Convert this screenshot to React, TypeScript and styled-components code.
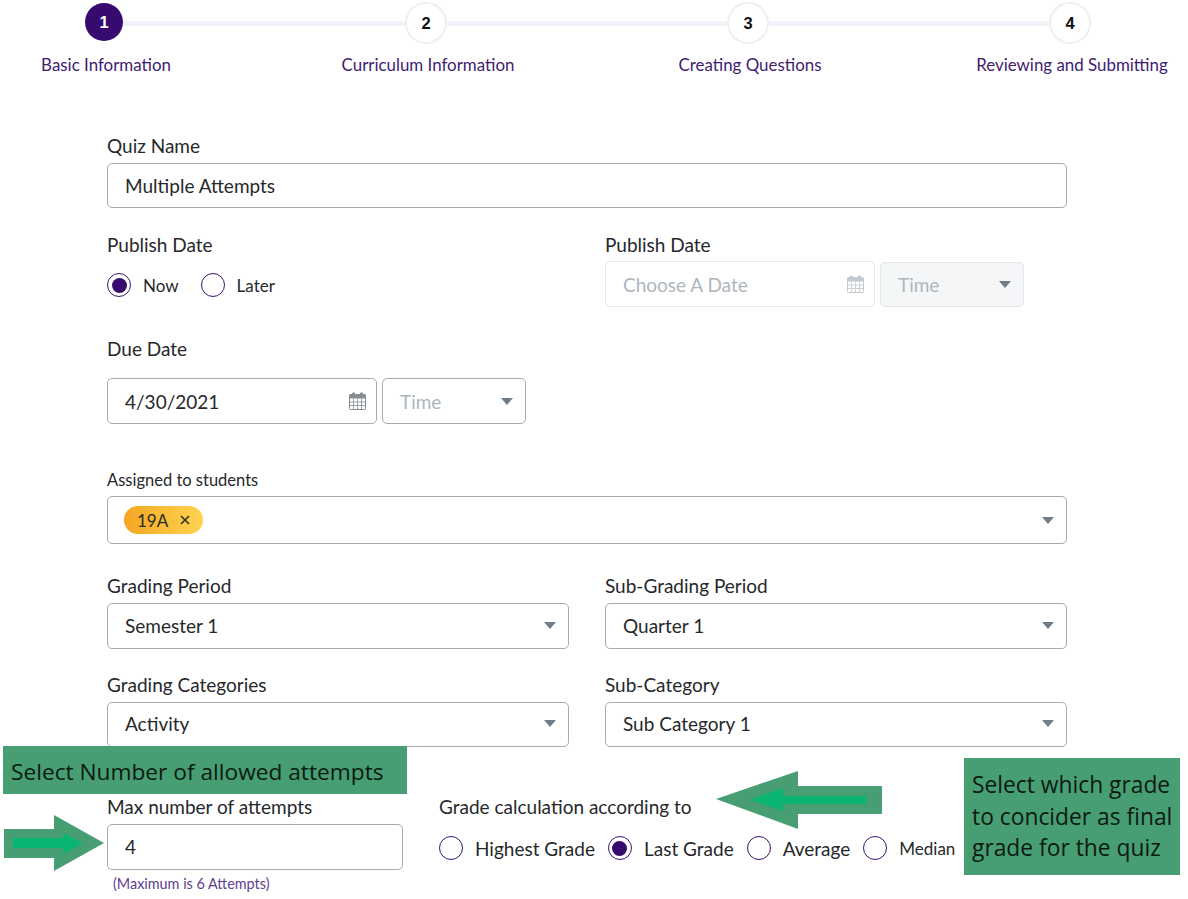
import React from "react";
import styled, { createGlobalStyle } from "styled-components";

const Global = createGlobalStyle`
  html, body { margin: 0; padding: 0; background: #fff; }
  body { font-family: Lato, "Liberation Sans", sans-serif; color: #212529; }
`;

const Page = styled.div`
  position: relative;
  width: 1188px;
  height: 899px;
  overflow: hidden;
  background: #fff;
  padding-top: 2px;
  box-sizing: border-box;
`;

const Rail = styled.div`
  display: flex;
  align-items: center;
  height: 42px;
  padding-left: 85px;
`;

const Circle = styled.div<{ $active?: boolean }>`
  box-sizing: border-box;
  flex: none;
  display: flex;
  align-items: center;
  justify-content: center;
  width: ${(p) => (p.$active ? "38px" : "42px")};
  height: ${(p) => (p.$active ? "38px" : "42px")};
  margin-top: ${(p) => (p.$active ? "-2px" : "0")};
  border-radius: 50%;
  background: ${(p) => (p.$active ? "#360a6e" : "#fff")};
  border: ${(p) => (p.$active ? "none" : "2px solid #efeff1")};
  color: ${(p) => (p.$active ? "#fff" : "#111")};
  font-family: "Liberation Sans", Arial, sans-serif;
  font-weight: 700;
  font-size: 16.5px;
`;

const Connector = styled.div<{ $width: number }>`
  flex: none;
  width: ${(p) => p.$width}px;
  height: 5px;
  background: #f3f2fb;
`;

const StepLabels = styled.div`
  display: grid;
  grid-template-columns: repeat(4, 322px);
  margin: 11px 0 0 -55px;
`;

const StepLabel = styled.div`
  text-align: center;
  font-size: 16.9px;
  line-height: 20px;
  color: #3f1c70;
  white-space: nowrap;
`;

const Form = styled.div`
  width: 960px;
  margin: 61px 0 0 107px;
`;

const Label = styled.div<{ $small?: boolean; $gap?: number; $top?: number }>`
  font-size: ${(p) => (p.$small ? "16.5px" : "19px")};
  line-height: 20px;
  color: #26282b;
  margin-top: ${(p) => p.$top ?? 0}px;
  margin-bottom: ${(p) => p.$gap ?? 7}px;
  white-space: nowrap;
`;

const Box = styled.div<{ $h?: number; $w?: number; $muted?: boolean; $disabled?: boolean; $lift?: boolean }>`
  box-sizing: border-box;
  display: flex;
  align-items: center;
  justify-content: space-between;
  flex: none;
  width: ${(p) => (p.$w ? `${p.$w}px` : "100%")};
  height: ${(p) => p.$h ?? 46}px;
  padding: 0 8px ${(p) => (p.$lift ? "2px" : "0")} 17px;
  background: ${(p) => (p.$disabled ? "#f5f6f7" : "#fff")};
  border: 1px solid #a9acaf;
  border-color: ${(p) => (p.$muted || p.$disabled ? "#e4e7e9" : "#a9acaf")};
  border-radius: 5px;
  font-size: 19px;
  color: #26282b;
`;

const Placeholder = styled.span`
  color: #aeb6bd;
`;

const Caret = styled.span`
  width: 0;
  height: 0;
  margin-right: 4px;
  border-left: 6.5px solid transparent;
  border-right: 6.5px solid transparent;
  border-top: 7px solid #6f7d89;
`;

const CalSvg = styled.svg<{ $light?: boolean }>`
  flex: none;
  width: 17px;
  height: 18px;
  margin-right: 2px;
  color: ${(p) => (p.$light ? "#c4c9cd" : "#858d94")};
`;

const Calendar = ({ light }: { light?: boolean }) => (
  <CalSvg $light={light} viewBox="0 0 17 18">
    <rect x="0.5" y="2.5" width="16" height="15" rx="1" fill="none" stroke="currentColor" />
    <rect x="0.5" y="2.5" width="16" height="4" fill="currentColor" />
    <rect x="3" y="0.5" width="3" height="4.5" rx="1" fill="currentColor" />
    <rect x="11" y="0.5" width="3" height="4.5" rx="1" fill="currentColor" />
    <path
      d="M0.5 10H16.5M0.5 13.5H16.5M4.5 6.5V17.5M8.5 6.5V17.5M12.5 6.5V17.5"
      stroke="currentColor"
      strokeWidth="0.8"
      fill="none"
    />
  </CalSvg>
);

const Two = styled.div<{ $top: number }>`
  display: grid;
  grid-template-columns: 462px 462px;
  column-gap: 36px;
  margin-top: ${(p) => p.$top}px;
`;

const Bottom = styled.div`
  display: grid;
  grid-template-columns: 296px 1fr;
  column-gap: 36px;
  margin-top: 50px;
`;

const Inline = styled.div`
  display: flex;
  align-items: center;
  gap: 5px;
`;

const RadioRow = styled.div<{ $top: number }>`
  display: flex;
  align-items: center;
  height: 24px;
  margin-top: ${(p) => p.$top}px;
`;

const RadioItem = styled.label<{ $gap: number; $size?: number }>`
  display: flex;
  align-items: center;
  gap: 12px;
  margin-right: ${(p) => p.$gap}px;
  font-size: ${(p) => p.$size ?? 19}px;
  color: #26282b;
  white-space: nowrap;
`;

const RadioDot = styled.span<{ $on?: boolean }>`
  box-sizing: border-box;
  flex: none;
  display: flex;
  align-items: center;
  justify-content: center;
  width: 24px;
  height: 24px;
  border: 1.5px solid #3a1470;
  border-radius: 50%;
  &::after {
    content: "";
    display: ${(p) => (p.$on ? "block" : "none")};
    width: 15px;
    height: 15px;
    border-radius: 50%;
    background: #360a6e;
  }
`;

const Chip = styled.span`
  display: inline-flex;
  align-items: center;
  gap: 12px;
  height: 28px;
  margin-left: -1px;
  padding: 0 13px;
  border-radius: 14px;
  background: linear-gradient(90deg, #f5a623, #fdd44e);
  font-size: 17px;
  color: #2b2a24;
`;

const ChipX = styled.svg`
  width: 10px;
  height: 10px;
`;

const Help = styled.div`
  margin: 5px 0 0 6px;
  font-size: 14.4px;
  line-height: 18px;
  color: #5f4192;
`;

const NoteBar = styled.div`
  position: absolute;
  left: 3px;
  top: 746px;
  box-sizing: border-box;
  width: 404px;
  height: 48px;
  padding: 11px 0 0 8px;
  background: #479e72;
  color: #0c1a12;
  font-family: "Open Sans", "Noto Sans", sans-serif;
  font-size: 22.7px;
  line-height: 30px;
  white-space: nowrap;
`;

const NoteBox = styled.div`
  position: absolute;
  left: 964px;
  top: 758px;
  box-sizing: border-box;
  width: 216px;
  height: 117px;
  padding: 11px 0 0 8px;
  background: #479e72;
  color: #0c1a12;
  font-family: "Open Sans", "Noto Sans", sans-serif;
  font-size: 22.8px;
  line-height: 31.5px;
  white-space: nowrap;
`;

const ArrowSvg = styled.svg`
  position: absolute;
  left: 0;
  top: 760px;
`;

export default function App() {
  return (
    <Page>
      <Global />
      <Rail>
        <Circle $active>1</Circle>
        <Connector $width={282} />
        <Circle>2</Circle>
        <Connector $width={280} />
        <Circle>3</Circle>
        <Connector $width={280} />
        <Circle>4</Circle>
      </Rail>
      <StepLabels>
        <StepLabel>Basic Information</StepLabel>
        <StepLabel>Curriculum Information</StepLabel>
        <StepLabel>Creating Questions</StepLabel>
        <StepLabel>Reviewing and Submitting</StepLabel>
      </StepLabels>

      <Form>
        <Label>Quiz Name</Label>
        <Box $h={45}>Multiple Attempts</Box>

        <Two $top={27}>
          <div>
            <Label $gap={0}>Publish Date</Label>
            <RadioRow $top={18}>
              <RadioItem $gap={22} $size={17}>
                <RadioDot $on />
                Now
              </RadioItem>
              <RadioItem $gap={0} $size={17}>
                <RadioDot />
                Later
              </RadioItem>
            </RadioRow>
          </div>
          <div>
            <Label $gap={6}>Publish Date</Label>
            <Inline>
              <Box $w={270} $muted>
                <Placeholder>Choose A Date</Placeholder>
                <Calendar light />
              </Box>
              <Box $w={144} $h={45} $disabled>
                <Placeholder>Time</Placeholder>
                <Caret />
              </Box>
            </Inline>
          </div>
        </Two>

        <Label $top={32} $gap={19}>Due Date</Label>
        <Inline>
          <Box $w={270}>
            4/30/2021
            <Calendar />
          </Box>
          <Box $w={144}>
            <Placeholder>Time</Placeholder>
            <Caret />
          </Box>
        </Inline>

        <Label $small $top={46} $gap={6}>Assigned to students</Label>
        <Box $h={48}>
          <Chip>
            19A
            <ChipX viewBox="0 0 10 10">
              <path d="M1 1 L9 9 M9 1 L1 9" stroke="#2b2a24" strokeWidth="1.5" fill="none" />
            </ChipX>
          </Chip>
          <Caret />
        </Box>

        <Two $top={32}>
          <div>
            <Label>Grading Period</Label>
            <Box $lift>Semester 1<Caret /></Box>
          </div>
          <div>
            <Label>Sub-Grading Period</Label>
            <Box $lift>Quarter 1<Caret /></Box>
          </div>
        </Two>

        <Two $top={26}>
          <div>
            <Label>Grading Categories</Label>
            <Box $h={45} $lift>Activity<Caret /></Box>
          </div>
          <div>
            <Label>Sub-Category</Label>
            <Box $h={45} $lift>Sub Category 1<Caret /></Box>
          </div>
        </Two>

        <Bottom>
          <div>
            <Label>Max number of attempts</Label>
            <Box $lift>4</Box>
            <Help>(Maximum is 6 Attempts)</Help>
          </div>
          <div>
            <Label $gap={0}>Grade calculation according to</Label>
            <RadioRow $top={19}>
              <RadioItem $gap={13}>
                <RadioDot />
                Highest Grade
              </RadioItem>
              <RadioItem $gap={13}>
                <RadioDot $on />
                Last Grade
              </RadioItem>
              <RadioItem $gap={13}>
                <RadioDot />
                Average
              </RadioItem>
              <RadioItem $gap={0} $size={17}>
                <RadioDot />
                Median
              </RadioItem>
            </RadioRow>
          </div>
        </Bottom>
      </Form>

      <NoteBar>Select Number of allowed attempts</NoteBar>
      <NoteBox>
        Select which grade
        <br />
        to concider as final
        <br />
        grade for the quiz
      </NoteBox>

      <ArrowSvg width="900" height="120" viewBox="0 760 900 120">
        <polygon points="4,829 54,829 54,815 104,843 54,871 54,858 4,858" fill="#479e72" />
        <polygon points="13,838 63,838 63,833 83,843 63,854 63,848 13,848" fill="#0ab573" />
        <polygon points="882,786 798,786 798,771 716,799 798,829 798,814 882,814" fill="#479e72" />
        <polygon points="866,796 783,796 783,788 750,799.5 783,811 783,804 866,804" fill="#0ab573" />
      </ArrowSvg>
    </Page>
  );
}
